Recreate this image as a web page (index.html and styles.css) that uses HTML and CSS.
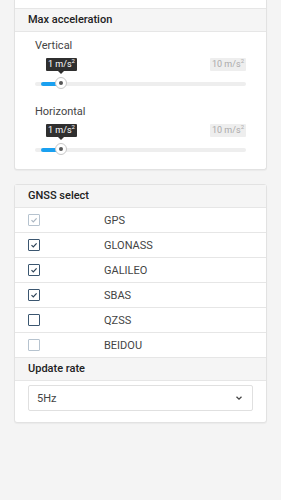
FILE: index.html
```html
<!DOCTYPE html>
<html lang="en">
<head>
    <meta charset="UTF-8">
    <meta name="viewport" content="width=device-width, initial-scale=1.0">
    <title>Receiver settings</title>
    <link rel="stylesheet" href="styles.css">
</head>
<body>
    <div class="card card-first">
        <div class="card-rest"></div>
        <div class="card-header">Max acceleration</div>
        <div class="slider-block">
            <div class="slider-label">Vertical</div>
            <div class="slider-values">
                <span class="tip">1 m/s<sup>2</sup></span>
                <span class="max">10 m/s<sup>2</sup></span>
            </div>
            <div class="track">
                <div class="fill"></div>
                <div class="thumb"></div>
            </div>
        </div>
        <div class="slider-block">
            <div class="slider-label">Horizontal</div>
            <div class="slider-values">
                <span class="tip">1 m/s<sup>2</sup></span>
                <span class="max">10 m/s<sup>2</sup></span>
            </div>
            <div class="track">
                <div class="fill"></div>
                <div class="thumb"></div>
            </div>
        </div>
    </div>

    <div class="card">
        <div class="card-header">GNSS select</div>
        <div class="gnss-row">
            <span class="check check-disabled checked"><svg viewBox="0 0 10 10"><path d="M2.5 5.2 L4.3 7 L7.6 3.4"/></svg></span>
            <span class="gnss-name">GPS</span>
        </div>
        <div class="gnss-row">
            <span class="check checked"><svg viewBox="0 0 10 10"><path d="M2.5 5.2 L4.3 7 L7.6 3.4"/></svg></span>
            <span class="gnss-name">GLONASS</span>
        </div>
        <div class="gnss-row">
            <span class="check checked"><svg viewBox="0 0 10 10"><path d="M2.5 5.2 L4.3 7 L7.6 3.4"/></svg></span>
            <span class="gnss-name">GALILEO</span>
        </div>
        <div class="gnss-row">
            <span class="check checked"><svg viewBox="0 0 10 10"><path d="M2.5 5.2 L4.3 7 L7.6 3.4"/></svg></span>
            <span class="gnss-name">SBAS</span>
        </div>
        <div class="gnss-row">
            <span class="check"></span>
            <span class="gnss-name">QZSS</span>
        </div>
        <div class="gnss-row">
            <span class="check check-disabled"></span>
            <span class="gnss-name">BEIDOU</span>
        </div>
        <div class="card-header card-header-mid">Update rate</div>
        <div class="select-block">
            <div class="select">
                <span>5Hz</span>
                <svg class="chevron" viewBox="0 0 10 10"><path d="M2.5 3.8 L5 6.2 L7.5 3.8"/></svg>
            </div>
        </div>
    </div>
</body>
</html>
```
FILE: styles.css
```css
body {
    margin: 0;
    background-color: #f4f4f4;
    font-family: Roboto, 'Liberation Sans', sans-serif;
    font-size: 11px;
    color: #333;
    height: 500px;
}

.card {
    margin: 0 14px 14px 14px;
    background-color: #fff;
    border: 1px solid #e2e2e2;
    border-radius: 3px;
    box-shadow: 0 1px 1px rgba(0, 0, 0, 0.04);
}

.card-first {
    border-top: none;
    border-radius: 0 0 3px 3px;
}

.card-rest {
    height: 8px;
    border-bottom: 1px solid #e6e6e6;
}

.card-header {
    height: 22px;
    line-height: 22px;
    padding-left: 13px;
    background-color: #f5f5f5;
    border-bottom: 1px solid #e6e6e6;
    font-weight: 500;
    color: #222;
}

.card-header-mid {
    border-top: 1px solid #e6e6e6;
}

.slider-block {
    padding: 7px 20px 11px 20px;
}

.slider-block + .slider-block {
    padding-top: 8px;
    padding-bottom: 17px;
}

.slider-label {
    height: 14px;
    line-height: 14px;
    color: #444;
}

.slider-values {
    display: flex;
    justify-content: space-between;
    margin-top: 5px;
    height: 13px;
}

.slider-values span {
    display: inline-block;
    height: 13px;
    line-height: 13px;
    padding: 0 2px;
    font-size: 9px;
    border-radius: 1px;
}

.slider-values sup {
    font-size: 6px;
    vertical-align: 4px;
    line-height: 0;
}

.tip {
    position: relative;
    margin-left: 11px;
    background-color: #2f2f2f;
    color: #fff;
}

.tip::after {
    content: "";
    position: absolute;
    left: 50%;
    bottom: -3px;
    margin-left: -3px;
    border-left: 3px solid transparent;
    border-right: 3px solid transparent;
    border-top: 3px solid #2f2f2f;
}

.max {
    background-color: #eeeeee;
    color: #aaa;
}

.track {
    position: relative;
    height: 4px;
    margin-top: 11px;
    background-color: #eeeeee;
    border-radius: 2px;
}

.fill {
    width: 22px;
    height: 4px;
    margin-left: 6px;
    background-color: #1aa0f0;
    border-radius: 2px;
}

.thumb {
    position: absolute;
    left: 20px;
    top: -5px;
    width: 12px;
    height: 12px;
    box-sizing: border-box;
    border: 1px solid #c8c8c8;
    border-radius: 50%;
    background-color: #fff;
}

.thumb::after {
    content: "";
    position: absolute;
    left: 3px;
    top: 3px;
    width: 4px;
    height: 4px;
    border-radius: 50%;
    background-color: #555;
}

.gnss-row {
    display: flex;
    align-items: center;
    height: 24px;
    padding-left: 13px;
    border-bottom: 1px solid #e6e6e6;
}

.gnss-row:nth-child(7) {
    border-bottom: none;
}

.check {
    display: flex;
    align-items: center;
    justify-content: center;
    width: 12px;
    height: 12px;
    border: 1px solid #3b5670;
    border-radius: 1px;
    box-sizing: border-box;
}

.check svg {
    width: 10px;
    height: 10px;
    fill: none;
    stroke: #2e4358;
    stroke-width: 1.2;
}

.check-disabled {
    border-color: #b6c3cf;
}

.check-disabled svg {
    stroke: #aab6c2;
}

.gnss-name {
    margin-left: 64px;
    color: #444;
}

.select-block {
    padding: 4px 13px 11px 13px;
}

.select {
    display: flex;
    align-items: center;
    justify-content: space-between;
    height: 24px;
    padding: 0 8px;
    border: 1px solid #e0e0e0;
    border-radius: 2px;
    color: #444;
}

.chevron {
    width: 10px;
    height: 10px;
    fill: none;
    stroke: #444;
    stroke-width: 1.3;
}
```
